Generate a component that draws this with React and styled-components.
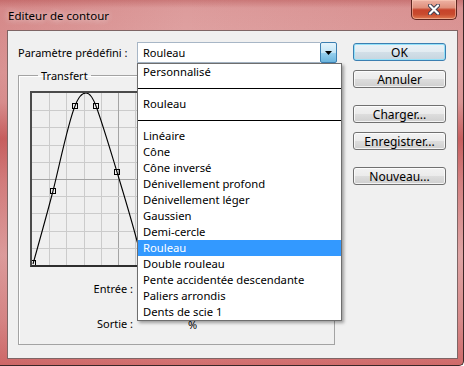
import React from "react";
import styled, { createGlobalStyle } from "styled-components";

const presets = [
  "Personnalisé",
  null,
  "Rouleau",
  null,
  "Linéaire",
  "Cône",
  "Cône inversé",
  "Dénivellement profond",
  "Dénivellement léger",
  "Gaussien",
  "Demi-cercle",
  "Rouleau",
  "Double rouleau",
  "Pente accidentée descendante",
  "Paliers arrondis",
  "Dents de scie 1",
];
const selectedIndex = 11;

const buttons = [
  { label: "OK", isDefault: true },
  { label: "Annuler" },
  { label: "Charger...", spaced: true },
  { label: "Enregistrer..." },
  { label: "Nouveau...", spaced: true },
];

const GRAPH = 172;
const points = [
  [1, 170],
  [21, 98],
  [43, 13],
  [64, 13],
  [85, 79],
];

function App() {
  const step = GRAPH / 10;
  return (
    <>
      <GlobalStyle />
      <Window>
        <TitleBar>
          <Title>Editeur de contour</Title>
          <CloseButton>
            <svg width="12" height="11" viewBox="0 0 12 11">
              <path d="M2 1.5 L10 9.5 M10 1.5 L2 9.5" stroke="#3b3f52" strokeWidth="4" strokeLinecap="round" />
              <path d="M2 1.5 L10 9.5 M10 1.5 L2 9.5" stroke="#ffffff" strokeWidth="2.2" strokeLinecap="round" />
            </svg>
          </CloseButton>
        </TitleBar>
        <Client>
          <LeftColumn>
            <PresetRow>
              <Label>Paramètre prédéfini :</Label>
              <SelectWrap>
                <SelectField>Rouleau</SelectField>
                <ArrowButton>
                  <svg width="7" height="4" viewBox="0 0 7 4">
                    <path d="M0 0 H7 L3.5 4 Z" fill="#000" />
                  </svg>
                </ArrowButton>
                <DropList>
                  {presets.map((item, i) =>
                    item === null ? (
                      <Separator key={i} />
                    ) : (
                      <ListRow key={i} $selected={i === selectedIndex}>
                        {item}
                      </ListRow>
                    )
                  )}
                </DropList>
              </SelectWrap>
            </PresetRow>
            <Group>
              <Legend>Transfert</Legend>
              <Graph>
                <svg width={GRAPH} height={GRAPH} viewBox={`0 0 ${GRAPH} ${GRAPH}`}>
                  {Array.from({ length: 9 }, (_, i) => {
                    const p = Math.round((i + 1) * step) + 0.5;
                    const c = i === 4 ? "#a4a4a4" : "#cbcbcb";
                    return (
                      <g key={i}>
                        <line x1={p} y1="0" x2={p} y2={GRAPH} stroke={c} />
                        <line x1="0" y1={p} x2={GRAPH} y2={p} stroke={c} />
                      </g>
                    );
                  })}
                  <path
                    d="M1 171 C8 146 15 121 21 98 C28 70 36 30 43 13 C46 5 50 0 54 0 C58 0 61 5 64 13 C71 32 78 56 85 79 C92 102 99 125 105 148 C108 158 110 165 112 171 L172 171"
                    fill="none"
                    stroke="#000"
                    strokeWidth="1.1"
                  />
                  {points.map(([x, y], i) => (
                    <rect key={i} x={x - 2.5} y={y - 2.5} width="5" height="5" fill="none" stroke="#000" />
                  ))}
                </svg>
              </Graph>
              <Readouts>
                <ReadLabel>Entrée :</ReadLabel>
                <ValueBox />
                <Unit />
                <ReadLabel>Sortie :</ReadLabel>
                <ValueText />
                <Unit>%</Unit>
              </Readouts>
            </Group>
          </LeftColumn>
          <RightColumn>
            {buttons.map((b) => (
              <Button key={b.label} $default={b.isDefault} $spaced={b.spaced}>
                {b.label}
              </Button>
            ))}
          </RightColumn>
        </Client>
      </Window>
    </>
  );
}

const GlobalStyle = createGlobalStyle`
  html, body {
    margin: 0;
    padding: 0;
  }
  body {
    width: 464px;
    height: 366px;
    overflow: hidden;
    font-family: "Noto Sans", "DejaVu Sans", sans-serif;
    font-size: 11px;
    color: #000;
  }
`;

const Window = styled.div`
  box-sizing: border-box;
  width: 464px;
  height: 366px;
  display: flex;
  flex-direction: column;
  border-right: 1px solid #3c2727;
  border-bottom: 1px solid #3c2727;
  border-bottom-right-radius: 5px;
  background:
    linear-gradient(180deg, rgba(170, 60, 60, 0.35) 0, rgba(255, 255, 255, 0) 8px),
    linear-gradient(90deg, rgba(190, 80, 80, 0.25) 0, rgba(0, 0, 0, 0) 40%, rgba(190, 80, 80, 0.15) 100%),
    linear-gradient(180deg, #dc9a9a 0, #e2a9a9 20%, #dfa0a0 28%, #c96262 38%, #d88a8a 50%, #e5b3b3 70%, #dc9494 88%, #d26f6f 100%);
`;

const TitleBar = styled.div`
  height: 30px;
  flex: none;
  display: flex;
  justify-content: space-between;
  align-items: flex-start;
  padding: 0 6px 0 8px;
`;

const Title = styled.div`
  font-size: 11.5px;
  line-height: 30px;
  padding-top: 1px;
  text-shadow: 0 0 6px rgba(255, 255, 255, 0.7), 0 0 10px rgba(255, 255, 255, 0.4);
`;

const CloseButton = styled.div`
  box-sizing: border-box;
  width: 46px;
  height: 20px;
  display: flex;
  align-items: center;
  justify-content: center;
  border: 1px solid #5e2620;
  border-top: none;
  border-radius: 0 0 5px 5px;
  background: linear-gradient(180deg, #eeb2a4 0, #e0907c 40%, #c7432b 52%, #c84a2e 75%, #e07a52 100%);
  box-shadow: inset 0 0 0 1px rgba(255, 210, 190, 0.5);
`;

const Client = styled.div`
  flex: 1;
  margin: 0 5px 6px 7px;
  border: 1px solid #7f6565;
  background: #f0f0f0;
  display: flex;
  gap: 16px;
  padding: 11px 0 0 10px;
`;

const LeftColumn = styled.div`
  width: 319px;
  display: flex;
  flex-direction: column;
`;

const PresetRow = styled.div`
  display: flex;
  align-items: center;
  height: 21px;
`;

const Label = styled.div`
  width: 119px;
  flex: none;
`;

const SelectWrap = styled.div`
  position: relative;
  width: 200px;
  height: 21px;
  display: flex;
`;

const SelectField = styled.div`
  flex: 1;
  box-sizing: border-box;
  border: 1px solid #a7b6c6;
  border-right: none;
  background: #fff;
  padding-left: 5px;
  line-height: 19px;
`;

const ArrowButton = styled.div`
  box-sizing: border-box;
  width: 17px;
  display: flex;
  align-items: center;
  justify-content: center;
  border: 1px solid #3c7fb1;
  border-radius: 2px;
  background: linear-gradient(180deg, #e5f4fc 0, #c4e5f6 50%, #98d1ef 51%, #6cb5dd 100%);
`;

const DropList = styled.div`
  position: absolute;
  top: 21px;
  left: 0;
  z-index: 10;
  box-sizing: border-box;
  width: 205px;
  border: 1px solid #6e6e6e;
  background: #fff;
  box-shadow: 2px 2px 3px rgba(0, 0, 0, 0.35);
  font-size: 11.25px;
`;

const ListRow = styled.div`
  height: 16px;
  line-height: 16px;
  padding-left: 5px;
  white-space: nowrap;
  background: ${(p) => (p.$selected ? "#3399ff" : "transparent")};
  color: ${(p) => (p.$selected ? "#fff" : "#000")};
`;

const Separator = styled.div`
  height: 16px;
  display: flex;
  align-items: center;
  &::after {
    content: "";
    flex: 1;
    height: 1px;
    background: #000;
  }
`;

const Group = styled.fieldset`
  box-sizing: border-box;
  width: 317px;
  margin: 5px 0 0;
  padding: 8px 0 10px 11px;
  border: 1px solid #a3a3a3;
  box-shadow: inset 1px 1px 0 #fff;
  min-width: 0;
`;

const Legend = styled.legend`
  padding: 0 3px;
  margin-left: 8px;
  line-height: 15px;
`;

const Graph = styled.div`
  width: 172px;
  height: 172px;
  border: 2px solid #2e2e2e;
  border-top-color: #4a4a4a;
  border-left-color: #4a4a4a;
  background: #efefef;
  overflow: hidden;
  svg {
    display: block;
  }
`;

const Readouts = styled.div`
  display: grid;
  grid-template-columns: 103px 47px auto;
  grid-auto-rows: 20px;
  column-gap: 4px;
  row-gap: 15px;
  align-items: center;
  margin-top: 12px;
  line-height: 12px;
`;

const ReadLabel = styled.div`
  text-align: right;
`;

const ValueBox = styled.div`
  height: 20px;
  box-sizing: border-box;
  border: 1px solid #abadb3;
  background: #fff;
`;

const ValueText = styled.div`
  height: 20px;
`;

const Unit = styled.div`
  padding-top: 1px;
  line-height: 10px;
`;

const RightColumn = styled.div`
  display: flex;
  flex-direction: column;
  gap: 9px;
  padding-top: 1px;
`;

const Button = styled.div`
  box-sizing: border-box;
  width: 93px;
  height: 18px;
  display: flex;
  align-items: center;
  justify-content: center;
  margin-top: ${(p) => (p.$spaced ? "8px" : "0")};
  border: 1px solid ${(p) => (p.$default ? "#3c7fb1" : "#707070")};
  border-radius: 3px;
  font-size: 12px;
  background: ${(p) =>
    p.$default
      ? "linear-gradient(180deg, #eaf2f7 0, #e2ebf1 50%, #d2dfe8 51%, #c6d5df 100%)"
      : "linear-gradient(180deg, #f2f2f2 0, #ebebeb 50%, #dddddd 51%, #cfcfcf 100%)"};
  box-shadow: inset 0 0 0 1px ${(p) => (p.$default ? "#93e1f9" : "rgba(255,255,255,0.75)")};
`;

export default App;
